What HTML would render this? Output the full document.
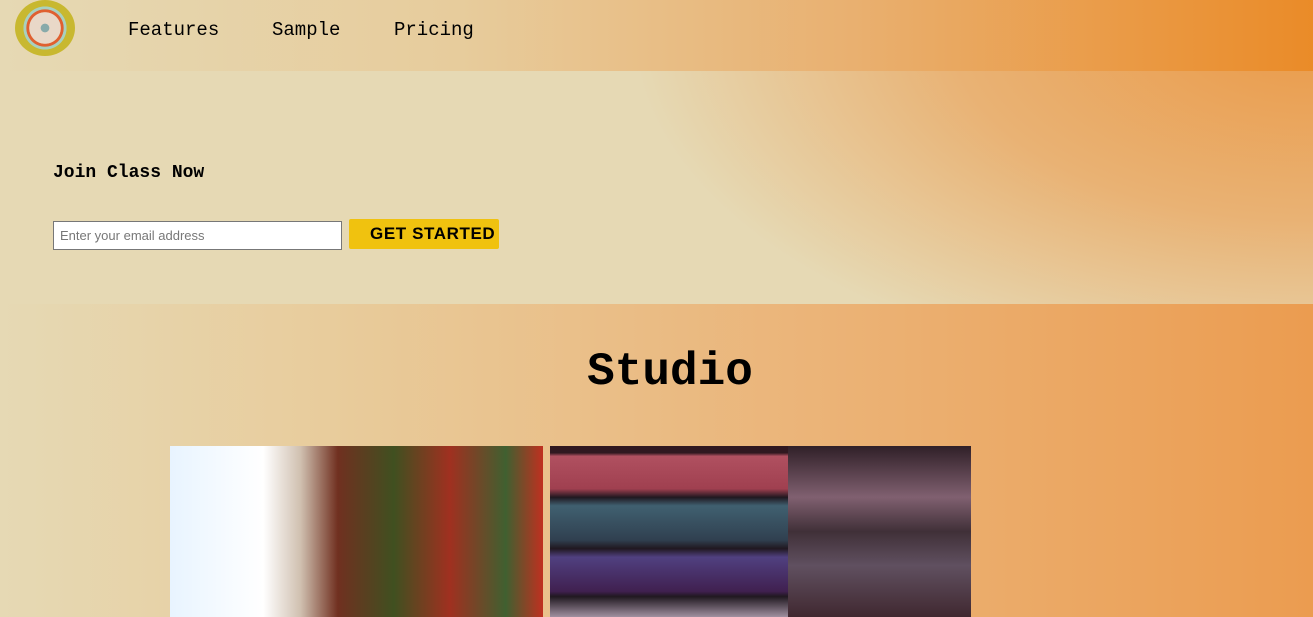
<!DOCTYPE html>
<html><head><style>
*{margin:0;padding:0;box-sizing:border-box}
body{width:1313px;height:617px;overflow:hidden;font-family:"Liberation Mono",monospace;background:#e6d9b4;position:relative}
.hdr{position:absolute;left:0;top:0;width:1313px;height:71px;background:linear-gradient(90deg,#e6d9b4 0%,#e7cc9c 35%,#e9b070 65%,#ea8b28 100%)}
.logo{position:absolute;left:15px;top:0;width:60px;height:56px;border-radius:50%;background:radial-gradient(circle,#8aa 0 10%,#e9d8c8 11% 38%,#e06030 39% 45%,#a8d0c0 46% 52%,#c8b830 53% 78%,#8a9a8a 79% 100%)}
.nav{position:absolute;top:19px;font-size:19px;color:#000}
.hero{position:absolute;left:0;top:71px;width:1313px;height:233px;background:radial-gradient(ellipse 800px 420px at 1313px -40px,#ea9a48 0%,#e9b274 45%,#e6d9b4 85%)}
.join{position:absolute;left:53px;top:163px;font-size:18px;font-weight:bold}
.inp{position:absolute;left:53px;top:221px;width:289px;height:29px;background:#fff;border:1px solid #777;font-family:"Liberation Sans",sans-serif;font-size:13px;color:#777;padding:6px 6px}
.btn{position:absolute;left:349px;top:219px;width:150px;height:30px;background:#f0c20f;border-radius:2px;font-family:"Liberation Sans",sans-serif;font-weight:bold;font-size:17px;letter-spacing:0.6px;padding:5px 0 0 21px;white-space:nowrap}
.sec{position:absolute;left:0;top:304px;width:1313px;height:313px;background:linear-gradient(90deg,#e6d9b4 0%,#e8cc9c 25%,#ebb57a 60%,#eb9c50 100%)}
.studio{position:absolute;left:0;width:1340px;top:346px;text-align:center;font-size:46px;font-weight:bold}
.im1{position:absolute;left:170px;top:446px;width:373px;height:171px;background:linear-gradient(90deg,#e8f4ff 0%,#fff 25%,#d0c0b0 35%,#703020 45%,#405020 60%,#a03020 75%,#406030 90%,#c03020 100%)}
.im2{position:absolute;left:550px;top:446px;width:421px;height:171px;background:linear-gradient(180deg,#301820 0 4%,#b05060 6%,#a04050 25%,#201820 30%,#406070 35%,#304050 55%,#201820 60%,#504080 65%,#402050 85%,#201820 88%,#a090a0 100%)}
.im2b{position:absolute;left:788px;top:446px;width:183px;height:171px;background:linear-gradient(180deg,#302028 0%,#806070 30%,#403038 50%,#605060 70%,#402830 100%)}
</style></head><body>
<div class="hdr"></div>
<div class="logo"></div>
<div class="nav" style="left:128px">Features</div>
<div class="nav" style="left:272px">Sample</div>
<div class="nav" style="left:394px">Pricing</div>
<div class="hero"></div>
<div class="join">Join Class Now</div>
<div class="inp">Enter your email address</div>
<div class="btn">GET STARTED</div>
<div class="sec"></div>
<div class="studio">Studio</div>
<div class="im1"></div>
<div class="im2"></div>
<div class="im2b"></div>
</body></html>
